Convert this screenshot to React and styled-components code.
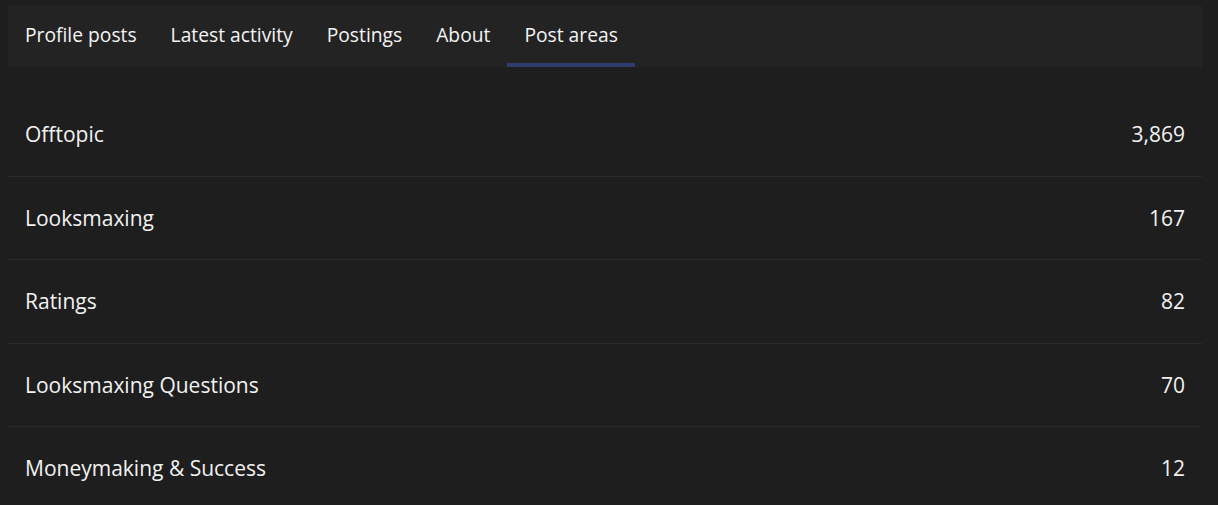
import React from 'react';
import styled, { createGlobalStyle } from 'styled-components';

const tabs = ['Profile posts', 'Latest activity', 'Postings', 'About', 'Post areas'];

const areas = [
  { name: 'Offtopic', count: '3,869' },
  { name: 'Looksmaxing', count: '167' },
  { name: 'Ratings', count: '82' },
  { name: 'Looksmaxing Questions', count: '70' },
  { name: 'Moneymaking & Success', count: '12' },
];

const App = () => {
  return (
    <>
      <GlobalStyle />
      <Page>
        <TabBar>
          {tabs.map((t) => (
            <Tab key={t} $active={t === 'Post areas'}>{t}</Tab>
          ))}
        </TabBar>
        <List>
          {areas.map((a) => (
            <Row key={a.name}>
              <Name>{a.name}</Name>
              <Count>{a.count}</Count>
            </Row>
          ))}
        </List>
      </Page>
    </>
  );
};

const GlobalStyle = createGlobalStyle`
  html, body {
    margin: 0;
    background: #1e1e1e;
    overflow: hidden;
  }
  body {
    font-family: 'Open Sans', 'Noto Sans', sans-serif;
    color: #f2f2f2;
  }
`;

const Page = styled.div`
  padding: 6px 16px 0 8px;
`;

const TabBar = styled.nav`
  display: flex;
  height: 61px;
  background: #232323;
`;

const Tab = styled.div`
  display: flex;
  align-items: center;
  padding: 4px 17px 4px;
  font-size: 19.25px;
  color: #f4f4f4;
  border-bottom: 4px solid ${(p) => (p.$active ? '#2c3d72' : 'transparent')};
  box-sizing: border-box;
`;

const List = styled.div`
  margin-top: 26px;
`;

const Row = styled.div`
  display: flex;
  align-items: center;
  justify-content: space-between;
  height: 83.5px;
  padding: 0 17px;
  box-sizing: border-box;
  border-bottom: 1px solid #2a2a2a;
  font-size: 21px;
`;

const Name = styled.span``;

const Count = styled.span``;

export default App;
